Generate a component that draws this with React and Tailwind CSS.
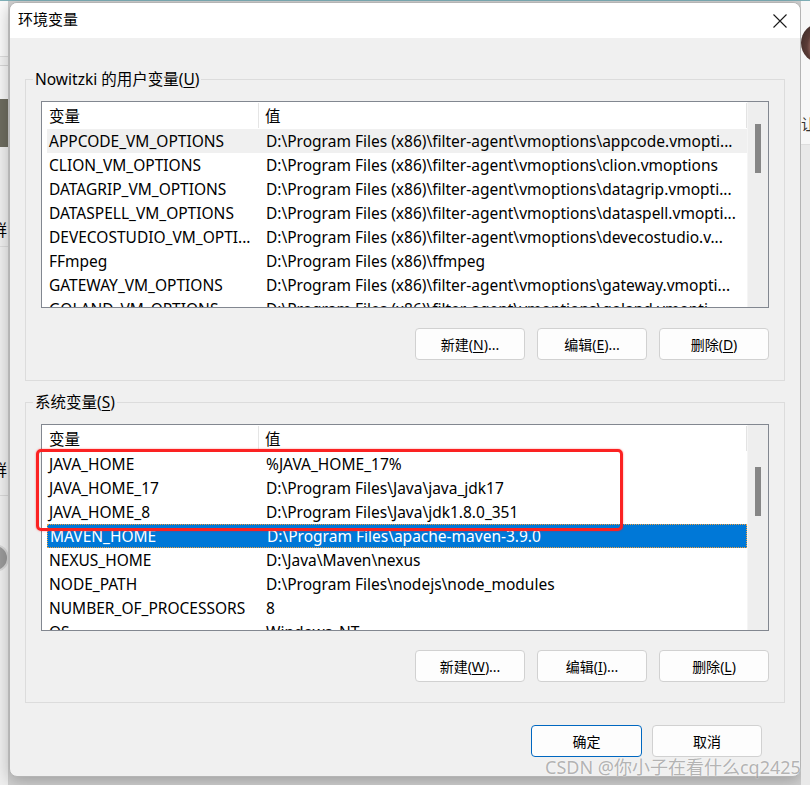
import React from 'react';

const userVars = [
  ['APPCODE_VM_OPTIONS', 'D:\\Program Files (x86)\\filter-agent\\vmoptions\\appcode.vmopti...'],
  ['CLION_VM_OPTIONS', 'D:\\Program Files (x86)\\filter-agent\\vmoptions\\clion.vmoptions'],
  ['DATAGRIP_VM_OPTIONS', 'D:\\Program Files (x86)\\filter-agent\\vmoptions\\datagrip.vmopti...'],
  ['DATASPELL_VM_OPTIONS', 'D:\\Program Files (x86)\\filter-agent\\vmoptions\\dataspell.vmopti...'],
  ['DEVECOSTUDIO_VM_OPTI...', 'D:\\Program Files (x86)\\filter-agent\\vmoptions\\devecostudio.v...'],
  ['FFmpeg', 'D:\\Program Files (x86)\\ffmpeg'],
  ['GATEWAY_VM_OPTIONS', 'D:\\Program Files (x86)\\filter-agent\\vmoptions\\gateway.vmopti...'],
  ['GOLAND_VM_OPTIONS', 'D:\\Program Files (x86)\\filter-agent\\vmoptions\\goland.vmopti...'],
];

const systemVars = [
  ['JAVA_HOME', '%JAVA_HOME_17%'],
  ['JAVA_HOME_17', 'D:\\Program Files\\Java\\java_jdk17'],
  ['JAVA_HOME_8', 'D:\\Program Files\\Java\\jdk1.8.0_351'],
  ['MAVEN_HOME', 'D:\\Program Files\\apache-maven-3.9.0'],
  ['NEXUS_HOME', 'D:\\Java\\Maven\\nexus'],
  ['NODE_PATH', 'D:\\Program Files\\nodejs\\node_modules'],
  ['NUMBER_OF_PROCESSORS', '8'],
  ['OS', 'Windows_NT'],
];

// label with an underlined access key, e.g. 新建(N)...
function Mnemonic({ before, k, after = '' }) {
  return (
    <span>
      {before}(<span className="underline underline-offset-2">{k}</span>){after}
    </span>
  );
}

function Button({ children, primary }) {
  return (
    <button
      className={
        primary
          ? 'w-[111px] h-[32px] rounded-[4px] bg-[#fdfdfd] border border-[#0067c0] text-[14px] text-black'
          : 'w-[110px] h-[32px] rounded-[4px] bg-[#fdfdfd] border border-[#d1d1d1] text-[14px] text-black'
      }
    >
      {children}
    </button>
  );
}

function VarList({ rows, hover, selected, thumbTop }) {
  return (
    <div className="h-[207px] border border-[#828790] bg-white flex overflow-hidden text-[15.5px]">
      <div className="flex-1 min-w-0 flex flex-col">
        <div className="h-[27px] shrink-0 flex">
          <div className="w-[217px] pl-[7px] pt-[3px] flex items-center border-r border-[#e5e5e5] my-[1px]">变量</div>
          <div className="flex-1 pl-[6px] pt-[3px] flex items-center">值</div>
          <div className="w-px bg-[#e3e3e3] my-[1px]" />
        </div>
        {rows.map(([name, value], i) => (
          <div
            key={name}
            className={
              i === selected
                ? 'h-6 shrink-0 ml-[5px] pt-[2px] flex items-center bg-[#0078d7] text-white border border-dotted border-[#f0a040]'
                : i === hover
                ? 'h-6 shrink-0 ml-[5px] pt-[2px] flex items-center bg-[#f0f0f0]'
                : 'h-6 shrink-0 ml-[5px] pt-[2px] flex items-center'
            }
          >
            <div className="w-[212px] pl-[2px] whitespace-nowrap overflow-hidden">{name}</div>
            <div className="flex-1 pl-[7px] whitespace-nowrap overflow-hidden">{value}</div>
          </div>
        ))}
      </div>
      <div className="w-[21px] shrink-0 bg-[#eeeeee] border-l border-[#f5f5f5]">
        <div className={thumbTop === 22 ? 'mt-[22px] ml-[7px] w-[6px] h-[49px] bg-[#868686]' : 'mt-[42px] ml-[7px] w-[6px] h-[49px] bg-[#868686]'} />
      </div>
    </div>
  );
}

export default function App() {
  return (
    <div className="relative w-[810px] h-[785px] overflow-hidden bg-[#d2d2d2] flex flex-col font-['Noto_Sans','Noto_Sans_CJK_SC',sans-serif] text-[15px] text-black">
      <div className="h-px shrink-0 bg-[#7fb0b8]" />
      <div className="flex flex-1">
        {/* bits of the windows behind, left */}
        <div className="w-[9px] shrink-0 flex flex-col overflow-hidden bg-[#efefef] border-r border-[#cfcfcf]">
          <div className="h-[56px] shrink-0 bg-[#fafafa] border-b border-[#dcdcdc]" />
          <div className="h-[9px] shrink-0 bg-[#f3f3f3] border-b border-[#d6d6d6]" />
          <div className="h-[33px] shrink-0 bg-[#f6f6f6]" />
          <div className="h-[48px] shrink-0 bg-[#6d6c5f]" />
          <div className="h-[73px] shrink-0" />
          <div className="h-[20px] shrink-0 -ml-[9px] leading-[20px] text-[16px] whitespace-nowrap">群</div>
          <div className="h-[214px] shrink-0 border-t border-[#dcdcdc] mt-[6px]" />
          <div className="h-[20px] shrink-0 -ml-[9px] leading-[20px] text-[16px] whitespace-nowrap">群</div>
          <div className="h-[16px] shrink-0 border-b border-[#d8d8d8]" />
          <div className="h-[20px] shrink-0 -ml-[9px] leading-[20px] text-[15px] text-[#888] whitespace-nowrap">扌</div>
          <div className="h-[28px] shrink-0" />
          <div className="w-[28px] h-[28px] shrink-0 -ml-[19px] rounded-full bg-[#9a9a9a] border-2 border-[#d8d8d8]" />
        </div>

        <div className="w-[792px] h-[775px] mt-[1px] shrink-0 rounded-[8px] border border-[#b4b4b4] bg-[#f0f0f0] shadow-[0_4px_16px_rgba(0,0,0,0.25)] overflow-hidden flex flex-col">
          <div className="h-[35px] shrink-0 bg-white flex items-center justify-between pl-[8px]">
            <span className="pb-[2px]">环境变量</span>
            <svg width="14" height="14" viewBox="0 0 14 14" className="mr-[13px]">
              <path d="M0.5 0.5 L13.5 13.5 M13.5 0.5 L0.5 13.5" stroke="#1a1a1a" strokeWidth="1.1" />
            </svg>
          </div>

          <div className="px-[15px] flex flex-col">
            <fieldset className="mt-[31px] border border-[#dcdcdc] pb-[20px]">
              <legend className="ml-[7px] px-[2px] leading-[20px] text-[15.5px]">
                Nowitzki 的用户变量<Mnemonic before="" k="U" />
              </legend>
              <div className="px-[15px] pt-[12px]">
                <VarList rows={userVars} hover={0} selected={-1} thumbTop={22} />
                <div className="mt-[20px] flex justify-end gap-[12px]">
                  <Button><Mnemonic before="新建" k="N" after="..." /></Button>
                  <Button><Mnemonic before="编辑" k="E" after="..." /></Button>
                  <Button><Mnemonic before="删除" k="D" /></Button>
                </div>
              </div>
            </fieldset>

            <fieldset className="mt-[11px] border border-[#dcdcdc] pb-[20px]">
              <legend className="ml-[7px] px-[2px] leading-[20px] text-[15.5px]">
                系统变量<Mnemonic before="" k="S" />
              </legend>
              <div className="px-[15px] pt-[12px]">
                <div className="relative">
                  <VarList rows={systemVars} hover={-1} selected={3} thumbTop={42} />
                  {/* red annotation box drawn over the list */}
                  <div className="absolute left-[-5px] top-[25px] w-[587px] h-[82px] border-[3px] border-[#fb2222] rounded-[5px] shadow-[0_0_2px_rgba(255,0,0,0.5)]" />
                </div>
                <div className="mt-[19px] flex justify-end gap-[12px]">
                  <Button><Mnemonic before="新建" k="W" after="..." /></Button>
                  <Button><Mnemonic before="编辑" k="I" after="..." /></Button>
                  <Button><Mnemonic before="删除" k="L" /></Button>
                </div>
              </div>
            </fieldset>

            <div className="mt-[22px] mr-[23px] flex justify-end gap-[10px]">
              <Button primary>确定</Button>
              <Button primary={false}>
                <span className="px-[1px]">取消</span>
              </Button>
            </div>
          </div>
        </div>

        {/* bits of the windows behind, right */}
        <div className="flex-1 flex flex-col overflow-hidden">
          <div className="h-[144px] shrink-0 bg-[#f7f7f7] border-b border-[#dedede] flex flex-col">
            <div className="mt-[22px] w-[40px] h-[40px] shrink-0 rounded-full bg-[radial-gradient(circle_at_70%_60%,#e8b4a8_0%,#c98f86_35%,#5a3b36_60%,#2f2321_100%)]" />
            <div className="mt-[51px] leading-[20px] text-[15px] text-[#333] whitespace-nowrap">让</div>
          </div>
          <div className="flex-1 bg-[#e9e9e9]" />
        </div>
      </div>

      {/* watermark */}
      <div className="absolute left-[545px] top-[755px] text-[18px] leading-[24px] text-[rgba(120,120,120,0.55)] whitespace-nowrap [text-shadow:0_0_2px_rgba(255,255,255,0.8)]">
        CSDN @你小子在看什么cq2425
      </div>
    </div>
  );
}
